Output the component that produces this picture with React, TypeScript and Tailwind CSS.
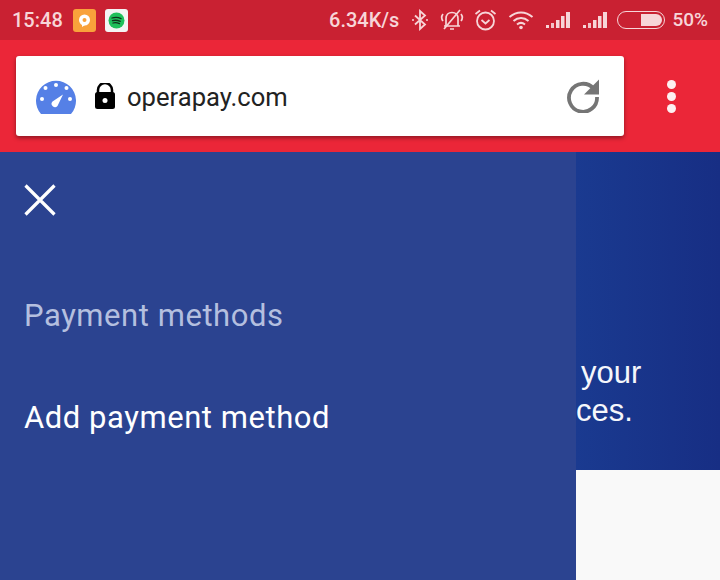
import React from 'react';

const font = { roboto: "font-['Roboto',sans-serif]" };

const Signal = () => (
  <svg width="26" height="18" viewBox="0 0 26 18" fill="currentColor">
    <rect x="1" y="14" width="3" height="3" />
    <rect x="6" y="12" width="3" height="5" opacity="0.9" />
    <rect x="11" y="9" width="3.500" height="8" />
    <rect x="16" y="5" width="3.500" height="12" />
    <rect x="21" y="1" width="4" height="16" />
  </svg>
);

const StatusBar = () => (
  <div className={`h-10 bg-[#c92132] flex items-center pl-3 pr-[12px] text-[#f7d5d8] ${font.roboto}`}>
    <span className="text-[20px] font-medium w-[51px]">15:48</span>
    <div className="ml-[10px] w-[23px] h-[23px] rounded-[3px] bg-[#f9a23b] flex items-center justify-center">
      <svg width="15" height="15" viewBox="0 0 15 15">
        <circle cx="7.5" cy="7" r="5.5" fill="#fff" />
        <circle cx="7.5" cy="7" r="2" fill="#f9a23b" />
        <path d="M5 11l0 3 3-2z" fill="#fff" />
      </svg>
    </div>
    <div className="ml-[9px] w-[23px] h-[23px] rounded-[3px] bg-[#f4f4f4] flex items-center justify-center">
      <svg width="17" height="17" viewBox="0 0 17 17" fill="none">
        <circle cx="8.5" cy="8.5" r="8" fill="#1fbf5a" />
        <path d="M4 6c3-1 6-1 9 .6M4.500 8.700c2.500-.8 5-.6 7.800.6M5 11c2-.6 4.200-.4 6.500.6" stroke="#10301c" strokeWidth="1.300" strokeLinecap="round" />
      </svg>
    </div>
    <span className="ml-auto text-[20px] font-medium">6.34K/s</span>
    <svg className="ml-[12px]" width="18" height="22" viewBox="0 0 18 22" fill="none" stroke="currentColor" strokeWidth="1.800">
      <path d="M4 6.500l10 9-5 4.500V2l5 4.500-10 9" />
      <circle cx="2" cy="11" r="1" fill="currentColor" stroke="none" />
      <circle cx="16" cy="11" r="1" fill="currentColor" stroke="none" />
    </svg>
    <svg className="ml-[11px]" width="24" height="24" viewBox="0 0 24 24" fill="none" stroke="currentColor" strokeWidth="1.700">
      <path d="M6 18V10.500C6 7 8.500 4.500 12 4.500S18 7 18 10.500V18H6zM4 18h16M10 21h4" />
      <path d="M3 6c-1.500 2-1.500 5 0 7M21 6c1.500 2 1.500 5 0 7M4 21L20 2" />
    </svg>
    <svg className="ml-[10px]" width="23" height="24" viewBox="0 0 23 24" fill="none" stroke="currentColor" strokeWidth="1.800">
      <circle cx="11.500" cy="13" r="8.500" />
      <path d="M7.500 12l4 3.500 4-3.500M1.500 6L6 2.500M21.500 6L17 2.500" />
    </svg>
    <svg className="ml-[11px]" width="26" height="20" viewBox="0 0 26 20" fill="none" stroke="currentColor" strokeWidth="2">
      <path d="M1.500 7c7-6 16-6 23 0M5.500 11c4.500-4 10.500-4 15 0M9 14.500c2.500-2 5.500-2 8 0" />
      <circle cx="13" cy="17.500" r="1.800" fill="currentColor" stroke="none" />
    </svg>
    <span className="ml-[11px] flex"><Signal /></span>
    <span className="ml-[11px] flex"><Signal /></span>
    <div className="ml-[9px] w-[48px] h-[18px] rounded-full border-[1.500px] border-[#f7d5d8] p-[2px] flex justify-end">
      <div className="w-[21px] h-full bg-[#f7d5d8] rounded-r-full" />
    </div>
    <span className="ml-[7px] text-[19px] font-medium">50%</span>
  </div>
);

const AddressBar = () => (
  <div className="h-[112px] bg-[#eb2638] flex items-center pl-4 pr-[44px]">
    <div className="w-[608px] h-20 bg-white rounded-[3px] shadow-[0_2px_4px_rgba(0,0,0,0.4)] flex items-center pl-5 pr-[24px]">
      <svg width="40" height="35" viewBox="0 0 40 35">
        <path d="M5 35A20 20 0 1 1 35 35a3 3 0 0 1-1 0H6z" fill="#5580e6" />
        <g fill="#fff">
          <circle cx="20" cy="6" r="2" />
          <circle cx="9.500" cy="9" r="2" />
          <circle cx="30.500" cy="9" r="2" />
          <circle cx="6" cy="20" r="2" />
          <circle cx="34" cy="20" r="2" />
          <path d="M16.500 22.500L27 15.500 21.500 27a3 3 0 0 1-5-4.500z" />
        </g>
      </svg>
      <svg className="ml-[19px]" width="20" height="26" viewBox="0 0 20 26">
        <path d="M3 10V7a7 7 0 0 1 14 0v3" fill="none" stroke="#000" strokeWidth="2.500" />
        <rect y="9" width="20" height="17" rx="2.500" fill="#000" />
        <circle cx="10" cy="17.500" r="2.500" fill="#fff" />
      </svg>
      <span className={`ml-3 text-[25.6px] text-[#222] relative top-px ${font.roboto}`}>operapay.com</span>
      <svg className="ml-auto" width="34" height="34" viewBox="0 0 34 34" fill="none">
        <path d="M27.500 9.500A14 14 0 1 0 31 18" stroke="#757575" strokeWidth="3.800" />
        <path d="M33 0.500V15.500H18z" fill="#757575" />
      </svg>
    </div>
    <div className="ml-auto flex flex-col gap-[3px]">
      <span className="w-[9px] h-[9px] rounded-full bg-[#fdf0f1]" />
      <span className="w-[9px] h-[9px] rounded-full bg-[#fdf0f1]" />
      <span className="w-[9px] h-[9px] rounded-full bg-[#fdf0f1]" />
    </div>
  </div>
);

const Drawer = () => (
  <div className={`w-[576px] h-full bg-[#2b4390] pl-6 pt-[32px] shrink-0 ${font.roboto} tracking-[0.55px]`}>
    <svg width="32" height="32" viewBox="0 0 32 32" stroke="#fff" strokeWidth="3.200" fill="none">
      <path d="M1.500 1.500l29 29M30.500 1.500l-29 29" />
    </svg>
    <div className="mt-[82px] text-[31px] leading-9 text-[#b4bfdf]">Payment methods</div>
    <div className="mt-[66px] text-[31px] leading-9 text-white">Add payment method</div>
  </div>
);

export default function App() {
  return (
    <div className="w-[720px] h-[580px] overflow-hidden flex flex-col">
      <StatusBar />
      <AddressBar />
      <div className="flex-1 flex min-h-0">
        <Drawer />
        <div className="flex-1 flex flex-col overflow-hidden">
          <div className="h-[318px] bg-gradient-to-r from-[#1a3a90] to-[#172e84] pt-[202px] font-['Liberation_Sans',sans-serif] text-[31px] leading-[38px] text-[#f5f7fb]">
            <div className="pl-[5px]">your</div>
            <div>ces.</div>
          </div>
          <div className="flex-1 bg-[#f9f9f9]" />
        </div>
      </div>
    </div>
  );
}
